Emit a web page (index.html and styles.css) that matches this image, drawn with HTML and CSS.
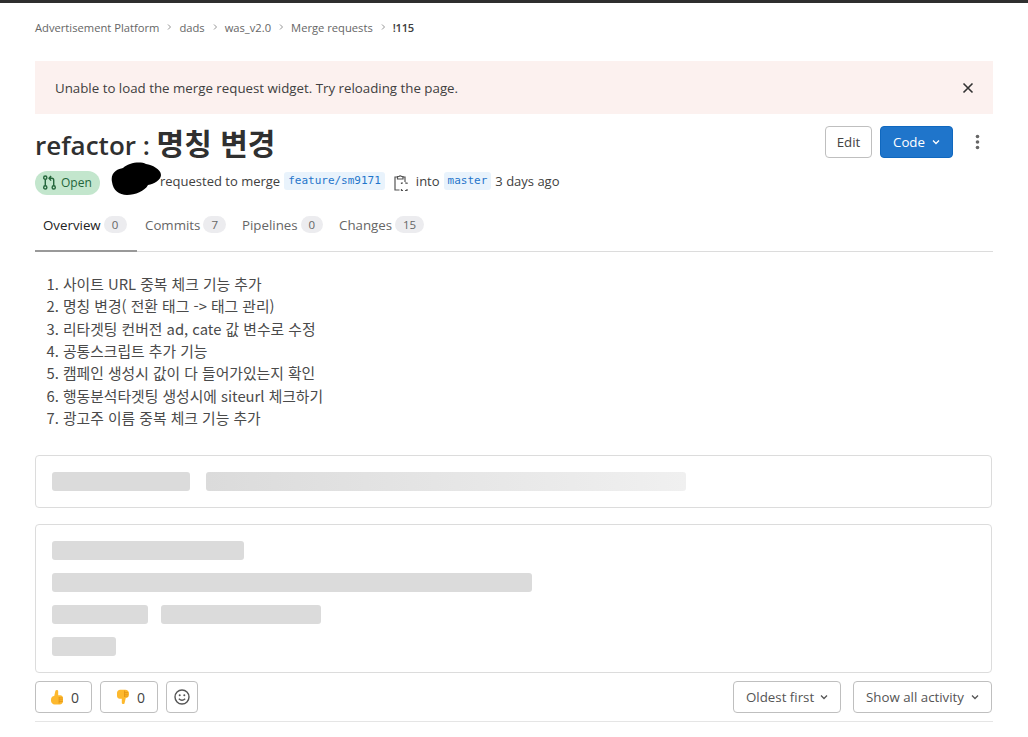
FILE: index.html
```html
<!DOCTYPE html>
<html lang="ko">
<head>
<meta charset="utf-8">
<title>refactor : 명칭 변경</title>
<link rel="stylesheet" href="styles.css">
</head>
<body>
<div class="topbar"></div>
<main class="page">
  <nav class="crumbs">
    <a>Advertisement Platform</a><svg class="sep" viewBox="0 0 8 8"><path d="M3 1.500 5.500 4 3 6.500"/></svg>
    <a>dads</a><svg class="sep" viewBox="0 0 8 8"><path d="M3 1.500 5.500 4 3 6.500"/></svg>
    <a>was_v2.0</a><svg class="sep" viewBox="0 0 8 8"><path d="M3 1.500 5.500 4 3 6.500"/></svg>
    <a>Merge requests</a><svg class="sep" viewBox="0 0 8 8"><path d="M3 1.500 5.500 4 3 6.500"/></svg>
    <a class="current">!115</a>
  </nav>

  <div class="alert">
    <span>Unable to load the merge request widget. Try reloading the page.</span>
    <svg class="close" viewBox="0 0 12 12"><path d="M1.500 1.500l9 9M10.500 1.500l-9 9"/></svg>
  </div>

  <div class="title-row">
    <h1>refactor : <span class="ko">명칭 변경</span></h1>
    <div class="actions">
      <button class="btn edit">Edit</button>
      <button class="btn code">Code<svg class="chev" viewBox="0 0 10 10"><path d="M2 3.500 5 6.500 8 3.500"/></svg></button>
      <svg class="kebab" viewBox="0 0 4 16"><circle cx="2" cy="2.500" r="1.800"/><circle cx="2" cy="8" r="1.800"/><circle cx="2" cy="13.500" r="1.800"/></svg>
    </div>
  </div>

  <div class="meta">
    <span class="status">
      <svg viewBox="0 0 16 16"><g fill="none" stroke="#24663b" stroke-width="1.500"><circle cx="3.500" cy="2.800" r="1.700"/><circle cx="3.500" cy="13.200" r="1.700"/><circle cx="12.500" cy="13.200" r="1.700"/><path d="M3.500 4.500v7M12.500 11.500V5.500q0-2-2-2H8M9.700 1 7.500 3.500 9.700 6"/></g></svg>
      Open
    </span>
    <span class="author"><svg class="blob" viewBox="0 0 52 34"><path d="M2 20C0 10 8 7 13 6 18 1 30-1 36 2c6 1 15 5 15 11 0 5-7 9-13 10-3 6-13 10-21 10C9 33 3 28 2 20z"/></svg></span>
    <span class="requested">requested to merge</span>
    <code class="ref branch">feature/sm9171</code>
    <svg class="copy" viewBox="0 0 14 18"><g fill="none" stroke="#555" stroke-width="1.200"><path d="M3.500 3H1v13h4.500"/><path d="M8.500 3H11v5"/><path d="M3.500 5V2.500h1.500a1.500 1.500 0 0 1 2.500 0H9V5z"/><path d="M7.500 10V9H9M11 9h2v1M13 15v1.500h-2M9 16.500H7.500V15"/></g></svg>
    <span class="into">into</span>
    <code class="ref">master</code>
    <span class="when">3 days ago</span>
  </div>

  <div class="tabs">
    <a class="tab active">Overview <b>0</b></a>
    <a class="tab">Commits <b>7</b></a>
    <a class="tab">Pipelines <b>0</b></a>
    <a class="tab">Changes <b class="wide">15</b></a>
  </div>

  <ol class="desc">
    <li>사이트 URL 중복 체크 기능 추가</li>
    <li>명칭 변경( 전환 태그 -&gt; 태그 관리)</li>
    <li>리타겟팅 컨버전 ad, cate 값 변수로 수정</li>
    <li>공통스크립트 추가 기능</li>
    <li>캠페인 생성시 값이 다 들어가있는지 확인</li>
    <li>행동분석타겟팅 생성시에 siteurl 체크하기</li>
    <li>광고주 이름 중복 체크 기능 추가</li>
  </ol>

  <section class="card card-top">
    <div class="sk sk-a"></div>
    <div class="sk sk-b"></div>
  </section>

  <section class="card card-main">
    <div class="sk sk-c"></div>
    <div class="sk sk-d"></div>
    <div class="sk-row"><div class="sk sk-e"></div><div class="sk sk-f"></div></div>
    <div class="sk sk-g"></div>
  </section>

  <div class="foot">
    <div class="foot-left">
      <button class="btn award up">
        <svg class="thumb" viewBox="0 0 13 16"><path fill="#fdb92e" d="M3.500 7 4.800 1.300C5.100 0 7.800 0 7.800 1.800V6h2.200c1.700 0 3 1.300 3 3v3.500c0 2-1.500 3.500-3.500 3.500H4c-2.200 0-4-1.800-4-4v-1C0 8.700 1.500 7 3.500 7z"/><path stroke="#e08f10" stroke-width=".8" fill="none" d="M8.800 8v7M8.800 9h4M8.800 11h4M8.800 13h4"/></svg>
        <span>0</span>
      </button>
      <button class="btn award down">
        <svg class="thumb" viewBox="0 0 13 16"><path fill="#fdb92e" d="M3.500 0H9c2.200 0 4 1.800 4 4v1c0 2.300-1.500 4-3.500 4L8.200 14.700C7.900 16 5.200 16 5.200 14.200V10H3c-1.700 0-3-1.300-3-3V3.500C0 1.500 1.500 0 3.500 0z"/><path stroke="#e08f10" stroke-width=".8" fill="none" d="M8.200 1v7M8.200 3h4M8.200 5h4M8.200 7h4"/></svg>
        <span>0</span>
      </button>
      <button class="btn smile">
        <svg viewBox="0 0 16 16"><g fill="none" stroke="#555" stroke-width="1.400"><circle cx="8" cy="8" r="7"/><path d="M4.800 9.800q3.200 3 6.400 0"/></g><circle cx="5.700" cy="6.200" r="1" fill="#555"/><circle cx="10.300" cy="6.200" r="1" fill="#555"/></svg>
      </button>
    </div>
    <div class="foot-right">
      <button class="btn select oldest">Oldest first<svg class="chev" viewBox="0 0 10 10"><path d="M2 3.500 5 6.500 8 3.500"/></svg></button>
      <button class="btn select activity">Show all activity<svg class="chev" viewBox="0 0 10 10"><path d="M2 3.500 5 6.500 8 3.500"/></svg></button>
    </div>
  </div>
</main>
</body>
</html>
```
FILE: styles.css
```css
* { box-sizing: border-box; }
html, body { margin: 0; height: 737px; overflow: hidden; background: #fff; }
body {
  font-family: "Open Sans", "Noto Sans", "Noto Sans CJK KR", sans-serif;
  font-size: 13.300px;
  color: #404040;
}
.topbar { height: 3px; background: #2f2f2f; }
.page { padding: 0 35px; }

.crumbs { display: flex; align-items: center; height: 50px; padding-bottom: 2px; font-size: 11.200px; color: #666; }
.crumbs .sep { width: 8px; height: 8px; margin: 0 6px; fill: none; stroke: #888; stroke-width: .9; }
.crumbs .current { color: #404040; font-weight: 600; letter-spacing: -.3px; }

.alert {
  display: flex; justify-content: space-between; align-items: center;
  height: 53px; margin-top: 8px; padding: 0 19px 0 20px;
  background: #fcf1ef; color: #404040;
}
.close { width: 12px; height: 12px; fill: none; stroke: #333; stroke-width: 1.600; }

.title-row { display: flex; justify-content: space-between; align-items: flex-start; margin-top: 12px; }
h1 { margin: -2px 0 0; font-size: 26px; line-height: 36px; font-weight: 600; color: #303030; }
h1 .ko { font-family: "Noto Sans CJK KR", sans-serif; font-size: 30px; }
.actions { display: flex; align-items: center; gap: 8px; margin-right: 13px; }

.btn {
  display: inline-flex; align-items: center; height: 32px; padding: 0 12px;
  border: 1px solid #bfbfbf; border-radius: 4px; background: #fff;
  font: inherit; color: #444;
}
.edit { width: 47px; justify-content: center; padding: 0; }
.code { width: 73px; padding: 0 0 0 12px; gap: 6px; background: #1f75cb; border-color: #1068bf; color: #fff; }
.code .chev { stroke: #fff; }
.chev { width: 10px; height: 10px; fill: none; stroke: #555; stroke-width: 1.300; }
.kebab { width: 5px; height: 16px; margin-left: 14px; fill: #666; }

.meta { display: flex; align-items: center; height: 24px; margin-top: 6px; font-size: 13px; }
.status {
  display: inline-flex; align-items: center; gap: 4px; width: 65px; height: 24px; padding-left: 7px;
  border-radius: 12px; background: #c3e6cd; color: #24663b; font-size: 12px; margin-top: 3px;
}
.status svg { width: 15px; height: 15px; }
.author { position: relative; width: 60px; align-self: stretch; flex: none; }
.blob { position: absolute; left: 10px; top: -7px; width: 52px; height: 34px; fill: #000; }
.requested { margin-right: 4px; }
.ref {
  font-family: "DejaVu Sans Mono", "Liberation Mono", monospace; font-size: 11px; color: #1f75cb;
  background: #e9f3fc; border-radius: 3px; padding: 1px 4px; line-height: 16px;
}
.copy { width: 14px; height: 18px; margin: 3px 8px 0 9px; }
.into { margin-right: 4px; }
.when { margin-left: 4px; }

.tabs { display: flex; height: 49px; margin-top: 10px; border-bottom: 1px solid #dcdcdc; }
.tab { display: flex; align-items: center; gap: 3px; padding: 0 8px 6px; height: 49px; color: #666; }
.tab b { font-weight: 400; font-size: 11.500px; color: #666; background: #ececef; border-radius: 9px; width: 23px; height: 17px; line-height: 17px; text-align: center; }
.tab b.wide { width: 29px; }
.tab.active { color: #222; box-shadow: inset 0 -2px 0 0 #999; width: 102px; }
.tab:nth-child(2) { width: 97px; }
.tab:nth-child(3) { width: 97px; }

.desc { margin: 21px 0 0; padding: 0 0 0 28px; font-family: "Noto Sans CJK KR", sans-serif; font-size: 14.800px; line-height: 22.330px; color: #4a4a4a; }

.card { border: 1px solid #dcdcdc; border-radius: 4px; width: 957px; }
.card-top { display: flex; gap: 16px; height: 53px; margin-top: 25.500px; padding: 16px; }
.card-main { height: 149px; margin-top: 16px; padding: 16px; }
.sk { height: 19px; border-radius: 3px; background: #dbdbdb; }
.sk-a { width: 138px; }
.sk-b { width: 480px; background: linear-gradient(90deg, #dbdbdb 0%, #f0f0f0 100%); }
.sk-c { width: 192px; }
.sk-d { width: 480px; margin-top: 13px; }
.sk-row { display: flex; gap: 13px; margin-top: 13px; }
.sk-e { width: 96px; }
.sk-f { width: 160px; }
.sk-g { width: 64px; margin-top: 13px; }

.foot { display: flex; justify-content: space-between; align-items: center; width: 958px; height: 49px; padding: 8px 0 7px; border-bottom: 1px solid #e5e5e5; }
.foot-left, .foot-right { display: flex; gap: 8px; }
.foot-right { gap: 12px; margin-right: 1px; }
.award { gap: 8px; font-size: 14px; }
.up { width: 57px; padding-left: 15px; }
.down { width: 58px; padding-left: 16px; }
.thumb { width: 13px; height: 16px; }
.smile { width: 32px; padding: 0; justify-content: center; }
.smile svg { width: 16px; height: 16px; }
.select { justify-content: space-between; padding: 0 11px 0 12px; color: #555; }
.oldest { width: 108px; }
.activity { width: 139px; }
```
